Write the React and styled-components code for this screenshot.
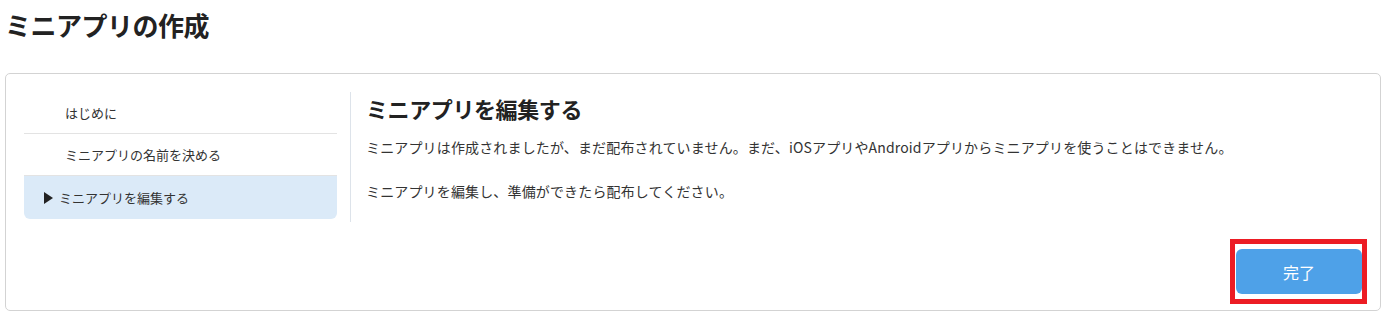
import React from "react";
import styled, { createGlobalStyle } from "styled-components";

const Global = createGlobalStyle`
  html, body { margin: 0; padding: 0; background: #fff; }
  body {
    font-family: "Noto Sans CJK JP", "Noto Sans", "Liberation Sans", sans-serif;
    color: #333;
  }
`;

const Page = styled.div`
  padding: 0 6px 0 5px;
  width: 1387px;
  box-sizing: border-box;
`;

const Title = styled.h1`
  margin: 0;
  padding-top: 5px;
  font-size: 26px;
  line-height: 40px;
  font-weight: 700;
  color: #222;
  letter-spacing: -0.5px;
`;

const Card = styled.section`
  margin-top: 28px;
  border: 1px solid #d3d3d3;
  border-radius: 5px;
  padding: 18px 18px 16px 18px;
  display: flex;
  flex-direction: column;
  box-sizing: border-box;
  height: 238px;
`;

const Body = styled.div`
  display: flex;
  align-items: flex-start;
  height: 130px;
`;

const Nav = styled.ul`
  list-style: none;
  margin: 0;
  padding: 0;
  width: 313px;
  flex: none;
`;

const NavItem = styled.li`
  display: flex;
  align-items: center;
  height: ${(p) => (p.$active ? "43px" : "41px")};
  padding-left: ${(p) => (p.$active ? "20px" : "41px")};
  border-bottom: ${(p) => (p.$active ? "none" : "1px solid #e3e3e3")};
  background: ${(p) => (p.$active ? "#dbeaf8" : "transparent")};
  border-radius: ${(p) => (p.$active ? "0 0 6px 6px" : "0")};
  font-size: 13px;
  color: #333;
  gap: 6px;
`;

const Arrow = styled.span`
  width: 0;
  height: 0;
  border-top: 6px solid transparent;
  border-bottom: 6px solid transparent;
  border-left: 9px solid #222;
`;

const Main = styled.div`
  margin-left: 13px;
  border-left: 1px solid #dde3ea;
  padding-left: 15px;
  align-self: stretch;
`;

const Heading = styled.h2`
  margin: 0;
  font-size: 22px;
  line-height: 32px;
  font-weight: 700;
  color: #222;
  letter-spacing: -0.4px;
`;

const Para = styled.p`
  margin: ${(p) => p.$top || 0} 0 0 0;
  font-size: 14px;
  line-height: 22px;
  letter-spacing: 0.15px;
  color: #333;
`;

const Footer = styled.div`
  margin-top: auto;
  display: flex;
  justify-content: flex-end;
`;

const Highlight = styled.div`
  position: relative;
  &::after {
    content: "";
    position: absolute;
    top: -10px;
    bottom: -10px;
    left: -6px;
    right: -5px;
    border: 5px solid #ec1c24;
    pointer-events: none;
  }
`;

const Button = styled.button`
  width: 126px;
  height: 45px;
  border: none;
  border-radius: 6px;
  background: #4ea1e8;
  color: #fff;
  font-family: inherit;
  font-size: 16px;
  cursor: pointer;
`;

export default function App() {
  return (
    <>
      <Global />
      <Page>
        <Title>ミニアプリの作成</Title>
        <Card>
          <Body>
            <Nav>
              <NavItem>はじめに</NavItem>
              <NavItem>ミニアプリの名前を決める</NavItem>
              <NavItem $active>
                <Arrow />
                ミニアプリを編集する
              </NavItem>
            </Nav>
            <Main>
              <Heading>ミニアプリを編集する</Heading>
              <Para $top="12px">
                ミニアプリは作成されましたが、まだ配布されていません。まだ、iOSアプリやAndroidアプリからミニアプリを使うことはできません。
              </Para>
              <Para $top="22px">ミニアプリを編集し、準備ができたら配布してください。</Para>
            </Main>
          </Body>
          <Footer>
            <Highlight>
              <Button>完了</Button>
            </Highlight>
          </Footer>
        </Card>
      </Page>
    </>
  );
}
